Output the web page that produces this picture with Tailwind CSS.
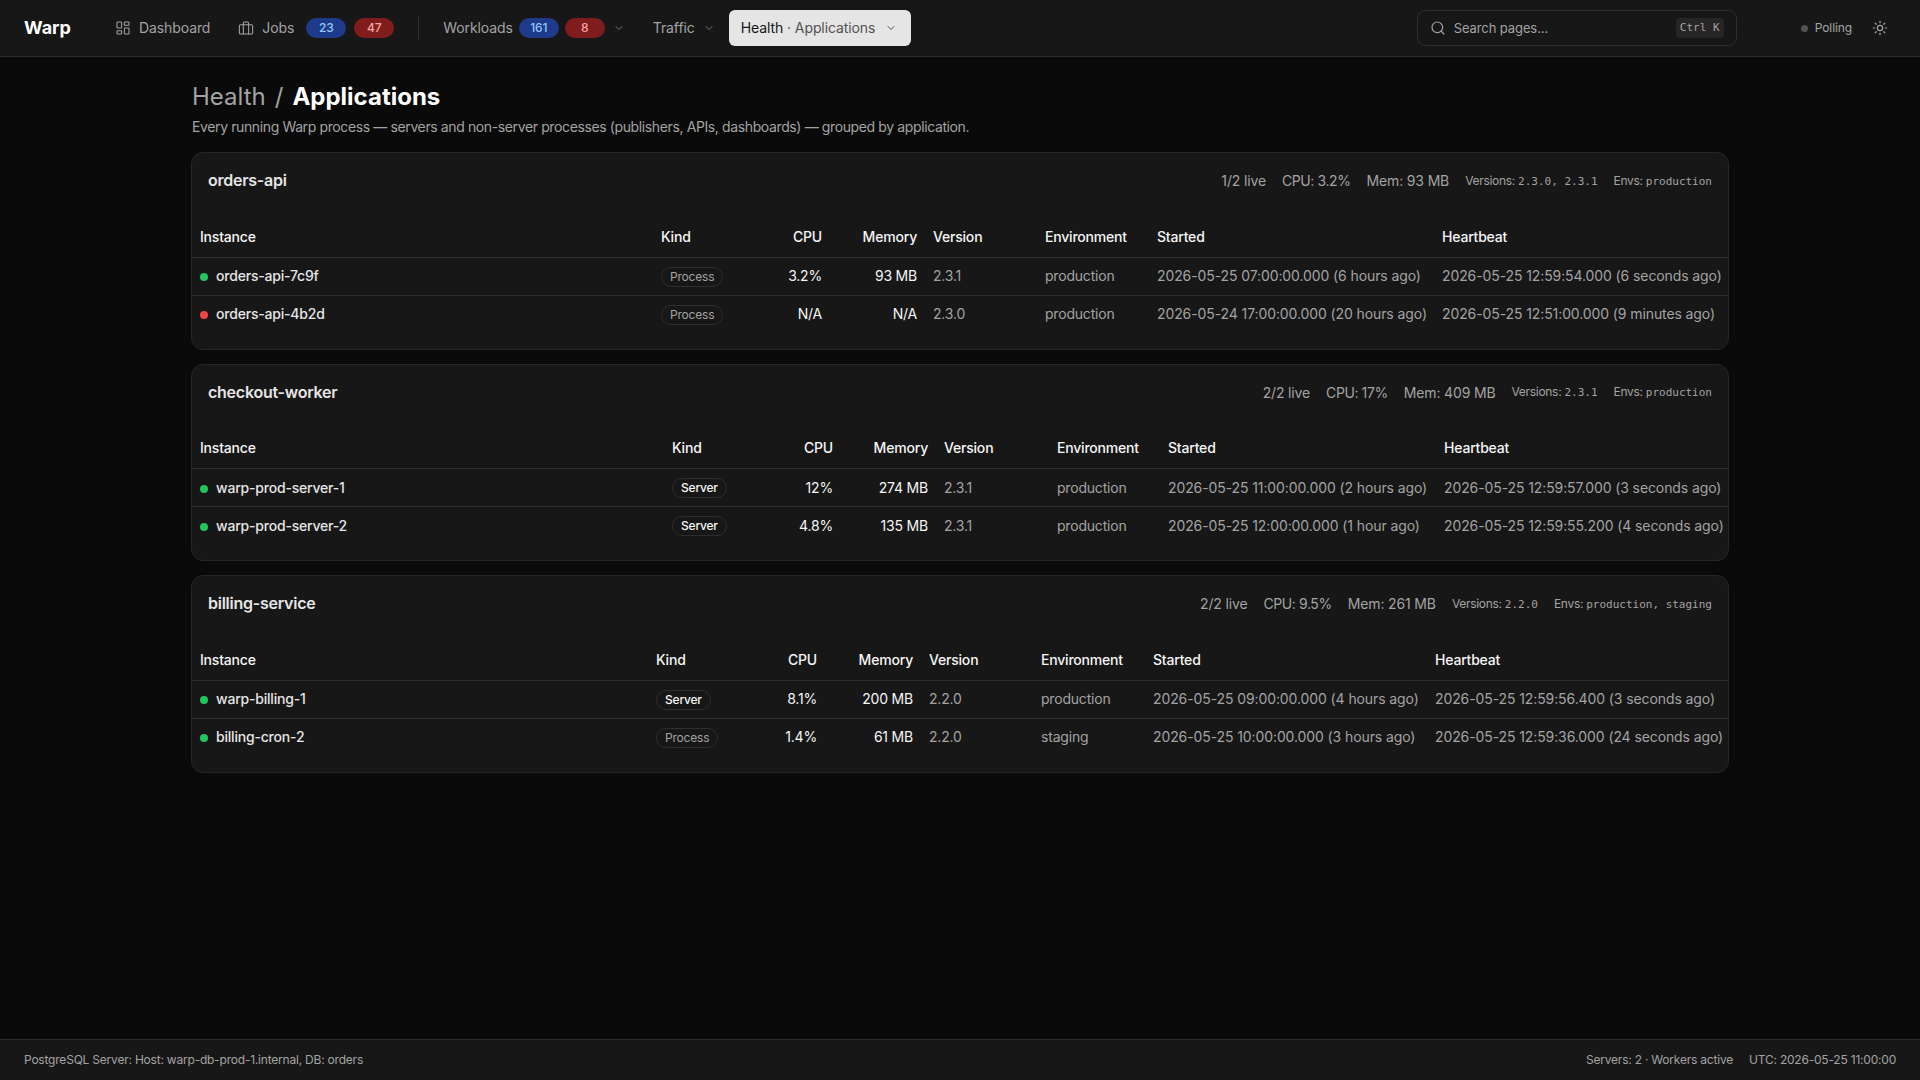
<!DOCTYPE html>
<html lang="en">
<head>
    <meta charset="UTF-8">
    <title>Warp - Health / Applications</title>
    <script src="https://cdn.jsdelivr.net/npm/@tailwindcss/browser@4"></script>
</head>
<body class="bg-[#0a0a0a] text-neutral-200 font-['Inter',sans-serif] h-[1080px] flex flex-col overflow-hidden">
    <!-- Top nav -->
    <header class="h-[57px] shrink-0 bg-[#171717] border-b border-[#2e2e2e] flex items-center pl-6 pr-8 text-sm tracking-[-0.1px] text-[#a3a3a3]">
        <span class="text-lg font-bold text-white w-[79px] tracking-normal">Warp</span>
        <a class="flex items-center gap-2 px-3 h-9">
            <svg class="w-4 h-4" viewBox="0 0 24 24" fill="none" stroke="currentColor" stroke-width="1.6" stroke-linecap="round" stroke-linejoin="round"><rect x="3" y="3" width="7" height="9" rx="1"/><rect x="14" y="3" width="7" height="5" rx="1"/><rect x="14" y="12" width="7" height="9" rx="1"/><rect x="3" y="16" width="7" height="5" rx="1"/></svg>
            <span>Dashboard</span>
        </a>
        <a class="flex items-center gap-2 pl-4 h-9">
            <svg class="w-4 h-4" viewBox="0 0 24 24" fill="none" stroke="currentColor" stroke-width="1.6" stroke-linecap="round" stroke-linejoin="round"><rect x="2" y="7" width="20" height="14" rx="2"/><path d="M16 21V5a2 2 0 0 0-2-2h-4a2 2 0 0 0-2 2v16"/></svg>
            <span>Jobs</span>
            <span class="ml-1 w-10 h-5 rounded-full bg-[#1e3a8a] text-[#93c5fd] text-xs font-medium flex items-center justify-center">23</span>
            <span class="w-10 h-5 rounded-full bg-[#7f1d1d] text-[#fca5a5] text-xs font-medium flex items-center justify-center">47</span>
        </a>
        <div class="w-px h-6 bg-[#2e2e2e] ml-6 mr-6"></div>
        <a class="flex items-center gap-1.5 h-9">
            <span>Workloads</span>
            <span class="w-10 h-5 rounded-full bg-[#1e3a8a] text-[#93c5fd] text-xs font-medium flex items-center justify-center">161</span>
            <span class="w-10 h-5 rounded-full bg-[#7f1d1d] text-[#fca5a5] text-xs font-medium flex items-center justify-center">8</span>
            <svg class="w-3 h-3 ml-0.5 text-[#737373]" viewBox="0 0 24 24" fill="none" stroke="currentColor" stroke-width="2" stroke-linecap="round" stroke-linejoin="round"><path d="m6 9 6 6 6-6"/></svg>
        </a>
        <a class="flex items-center gap-2 ml-7 h-9">
            <span>Traffic</span>
            <svg class="w-3 h-3 text-[#737373]" viewBox="0 0 24 24" fill="none" stroke="currentColor" stroke-width="2" stroke-linecap="round" stroke-linejoin="round"><path d="m6 9 6 6 6-6"/></svg>
        </a>
        <a class="flex items-center gap-1 ml-3.5 h-9 pl-3 pr-3.5 rounded-md bg-[#e5e5e5] text-[#171717]">
            <span>Health</span>
            <span class="text-[#525252]">· Applications</span>
            <svg class="w-3 h-3 ml-1.5 text-[#525252]" viewBox="0 0 24 24" fill="none" stroke="currentColor" stroke-width="2" stroke-linecap="round" stroke-linejoin="round"><path d="m6 9 6 6 6-6"/></svg>
        </a>
        <div class="ml-auto w-[320px] h-9 rounded-lg border border-[#2e2e2e] flex items-center pl-3 pr-3">
            <svg class="w-4 h-4 text-[#a3a3a3]" viewBox="0 0 24 24" fill="none" stroke="currentColor" stroke-width="1.8" stroke-linecap="round" stroke-linejoin="round"><circle cx="11" cy="11" r="8"/><path d="m21 21-4.3-4.3"/></svg>
            <span class="ml-2 text-[13px] text-[#a3a3a3]">Search pages...</span>
            <kbd class="ml-auto h-5 w-12 rounded bg-[#262626] text-[#a3a3a3] text-[11px] tracking-normal font-['DejaVu_Sans_Mono',monospace] flex items-center justify-center">Ctrl K</kbd>
        </div>
        <div class="ml-16 flex items-center gap-[7px] text-xs">
            <span class="w-[7px] h-[7px] rounded-full bg-[#525252]"></span>
            <span>Polling</span>
        </div>
        <svg class="ml-5 w-4 h-4 text-[#a3a3a3]" viewBox="0 0 24 24" fill="none" stroke="currentColor" stroke-width="1.8" stroke-linecap="round" stroke-linejoin="round"><circle cx="12" cy="12" r="4"/><path d="M12 2v2"/><path d="M12 20v2"/><path d="m4.93 4.93 1.41 1.41"/><path d="m17.66 17.66 1.41 1.41"/><path d="M2 12h2"/><path d="M20 12h2"/><path d="m6.34 17.66-1.41 1.41"/><path d="m19.07 4.93-1.41 1.41"/></svg>
    </header>

    <!-- Main content -->
    <main class="flex-1 w-[1538px] mx-auto pt-6">
        <h1 class="ml-px text-2xl leading-8 font-bold text-white"><span class="font-normal text-[#a3a3a3]">Health</span><span class="font-normal text-[#a3a3a3] mx-[9px]">/</span>Applications</h1>
        <p class="ml-px text-sm leading-5 tracking-[-0.38px] text-[#a3a3a3] mt-1 mb-[15px]">Every running Warp process — servers and non-server processes (publishers, APIs, dashboards) — grouped by application.</p>

        <!-- orders-api -->
        <section class="bg-[#171717] border border-[#262626] rounded-xl h-[197.5px] mb-3.5">
            <div class="flex items-center justify-between h-[64px] pb-2 px-4">
                <h2 class="mb-0.5 text-base font-semibold tracking-[-0.25px] text-[#e5e5e5]">orders-api</h2>
                <div class="flex items-center gap-4 text-sm tracking-[-0.15px] text-[#a3a3a3]">
                    <span>1/2 live</span><span class="tracking-[-0.4px]">CPU: 3.2%</span><span>Mem: 93 MB</span>
                    <span class="text-xs tracking-tight">Versions: <span class="font-['DejaVu_Sans_Mono',monospace] text-[11px] tracking-normal">2.3.0, 2.3.1</span></span>
                    <span class="text-xs tracking-tight">Envs: <span class="font-['DejaVu_Sans_Mono',monospace] text-[11px] tracking-normal">production</span></span>
                </div>
            </div>
            <table class="w-full table-fixed text-sm tracking-[-0.2px]">
                <colgroup><col class="w-[461px]"><col class="w-[116px]"><col class="w-[61px]"><col class="w-[95px]"><col class="w-[112px]"><col class="w-[112px]"><col class="w-[285px]"><col></colgroup>
                <thead class="text-[#f5f5f5]">
                    <tr class="h-[40px] border-b border-[#2e2e2e]">
                        <th class="px-2 text-left font-medium">Instance</th><th class="px-2 text-left font-medium">Kind</th><th class="px-2 text-right font-medium">CPU</th><th class="px-2 text-right font-medium">Memory</th><th class="px-2 text-left font-medium">Version</th><th class="px-2 text-left font-medium">Environment</th><th class="px-2 text-left font-medium">Started</th><th class="px-2 text-left font-medium">Heartbeat</th>
                    </tr>
                </thead>
                <tbody>
                    <tr class="h-[38px] border-b border-[#2e2e2e]">
                        <td class="px-2 font-medium text-[#e5e5e5]"><span class="inline-block w-2 h-2 rounded-full bg-[#22c55e] mr-2"></span>orders-api-7c9f</td>
                        <td class="px-2"><span class="inline-flex items-center h-5 px-2 rounded-full border border-[#2e2e2e] text-xs text-[#a3a3a3]">Process</span></td>
                        <td class="px-2 text-right text-[#f5f5f5]">3.2%</td><td class="px-2 text-right text-[#f5f5f5]">93 MB</td>
                        <td class="px-2 text-[#a3a3a3]">2.3.1</td><td class="px-2 text-[#a3a3a3]">production</td>
                        <td class="px-2 text-[#a3a3a3] tracking-[-0.1px] whitespace-nowrap">2026-05-25 07:00:00.000 (6 hours ago)</td><td class="px-2 text-[#a3a3a3] tracking-[-0.1px] whitespace-nowrap">2026-05-25 12:59:54.000 (6 seconds ago)</td>
                    </tr>
                    <tr class="h-[38px]">
                        <td class="px-2 font-medium text-[#e5e5e5]"><span class="inline-block w-2 h-2 rounded-full bg-[#ef4444] mr-2"></span>orders-api-4b2d</td>
                        <td class="px-2"><span class="inline-flex items-center h-5 px-2 rounded-full border border-[#2e2e2e] text-xs text-[#a3a3a3]">Process</span></td>
                        <td class="px-2 text-right text-[#f5f5f5]">N/A</td><td class="px-2 text-right text-[#f5f5f5]">N/A</td>
                        <td class="px-2 text-[#a3a3a3]">2.3.0</td><td class="px-2 text-[#a3a3a3]">production</td>
                        <td class="px-2 text-[#a3a3a3] tracking-[-0.1px] whitespace-nowrap">2026-05-24 17:00:00.000 (20 hours ago)</td><td class="px-2 text-[#a3a3a3] tracking-[-0.1px] whitespace-nowrap">2026-05-25 12:51:00.000 (9 minutes ago)</td>
                    </tr>
                </tbody>
            </table>
        </section>

        <!-- checkout-worker -->
        <section class="bg-[#171717] border border-[#262626] rounded-xl h-[197.5px] mb-3.5">
            <div class="flex items-center justify-between h-[64px] pb-2 px-4">
                <h2 class="mb-0.5 text-base font-semibold tracking-[-0.25px] text-[#e5e5e5]">checkout-worker</h2>
                <div class="flex items-center gap-4 text-sm tracking-[-0.15px] text-[#a3a3a3]">
                    <span>2/2 live</span><span class="tracking-[-0.4px]">CPU: 17%</span><span>Mem: 409 MB</span>
                    <span class="text-xs tracking-tight">Versions: <span class="font-['DejaVu_Sans_Mono',monospace] text-[11px] tracking-normal">2.3.1</span></span>
                    <span class="text-xs tracking-tight">Envs: <span class="font-['DejaVu_Sans_Mono',monospace] text-[11px] tracking-normal">production</span></span>
                </div>
            </div>
            <table class="w-full table-fixed text-sm tracking-[-0.2px]">
                <colgroup><col class="w-[472px]"><col class="w-[116px]"><col class="w-[61px]"><col class="w-[95px]"><col class="w-[113px]"><col class="w-[111px]"><col class="w-[276px]"><col></colgroup>
                <thead class="text-[#f5f5f5]">
                    <tr class="h-[40px] border-b border-[#2e2e2e]">
                        <th class="px-2 text-left font-medium">Instance</th><th class="px-2 text-left font-medium">Kind</th><th class="px-2 text-right font-medium">CPU</th><th class="px-2 text-right font-medium">Memory</th><th class="px-2 text-left font-medium">Version</th><th class="px-2 text-left font-medium">Environment</th><th class="px-2 text-left font-medium">Started</th><th class="px-2 text-left font-medium">Heartbeat</th>
                    </tr>
                </thead>
                <tbody>
                    <tr class="h-[38px] border-b border-[#2e2e2e]">
                        <td class="px-2 font-medium text-[#e5e5e5]"><span class="inline-block w-2 h-2 rounded-full bg-[#22c55e] mr-2"></span>warp-prod-server-1</td>
                        <td class="px-2"><span class="inline-flex items-center h-5 px-2 rounded-full border border-[#2e2e2e] text-xs font-medium text-[#f5f5f5]">Server</span></td>
                        <td class="px-2 text-right text-[#f5f5f5]">12%</td><td class="px-2 text-right text-[#f5f5f5]">274 MB</td>
                        <td class="px-2 text-[#a3a3a3]">2.3.1</td><td class="px-2 text-[#a3a3a3]">production</td>
                        <td class="px-2 text-[#a3a3a3] tracking-[-0.1px] whitespace-nowrap">2026-05-25 11:00:00.000 (2 hours ago)</td><td class="px-2 text-[#a3a3a3] tracking-[-0.1px] whitespace-nowrap">2026-05-25 12:59:57.000 (3 seconds ago)</td>
                    </tr>
                    <tr class="h-[38px]">
                        <td class="px-2 font-medium text-[#e5e5e5]"><span class="inline-block w-2 h-2 rounded-full bg-[#22c55e] mr-2"></span>warp-prod-server-2</td>
                        <td class="px-2"><span class="inline-flex items-center h-5 px-2 rounded-full border border-[#2e2e2e] text-xs font-medium text-[#f5f5f5]">Server</span></td>
                        <td class="px-2 text-right text-[#f5f5f5]">4.8%</td><td class="px-2 text-right text-[#f5f5f5]">135 MB</td>
                        <td class="px-2 text-[#a3a3a3]">2.3.1</td><td class="px-2 text-[#a3a3a3]">production</td>
                        <td class="px-2 text-[#a3a3a3] tracking-[-0.1px] whitespace-nowrap">2026-05-25 12:00:00.000 (1 hour ago)</td><td class="px-2 text-[#a3a3a3] tracking-[-0.1px] whitespace-nowrap">2026-05-25 12:59:55.200 (4 seconds ago)</td>
                    </tr>
                </tbody>
            </table>
        </section>

        <!-- billing-service -->
        <section class="bg-[#171717] border border-[#262626] rounded-xl h-[197.5px]">
            <div class="flex items-center justify-between h-[64px] pb-2 px-4">
                <h2 class="mb-0.5 text-base font-semibold tracking-[-0.25px] text-[#e5e5e5]">billing-service</h2>
                <div class="flex items-center gap-4 text-sm tracking-[-0.15px] text-[#a3a3a3]">
                    <span>2/2 live</span><span class="tracking-[-0.4px]">CPU: 9.5%</span><span>Mem: 261 MB</span>
                    <span class="text-xs tracking-tight">Versions: <span class="font-['DejaVu_Sans_Mono',monospace] text-[11px] tracking-normal">2.2.0</span></span>
                    <span class="text-xs tracking-tight">Envs: <span class="font-['DejaVu_Sans_Mono',monospace] text-[11px] tracking-normal">production, staging</span></span>
                </div>
            </div>
            <table class="w-full table-fixed text-sm tracking-[-0.2px]">
                <colgroup><col class="w-[456px]"><col class="w-[116px]"><col class="w-[61px]"><col class="w-[96px]"><col class="w-[112px]"><col class="w-[112px]"><col class="w-[282px]"><col></colgroup>
                <thead class="text-[#f5f5f5]">
                    <tr class="h-[40px] border-b border-[#2e2e2e]">
                        <th class="px-2 text-left font-medium">Instance</th><th class="px-2 text-left font-medium">Kind</th><th class="px-2 text-right font-medium">CPU</th><th class="px-2 text-right font-medium">Memory</th><th class="px-2 text-left font-medium">Version</th><th class="px-2 text-left font-medium">Environment</th><th class="px-2 text-left font-medium">Started</th><th class="px-2 text-left font-medium">Heartbeat</th>
                    </tr>
                </thead>
                <tbody>
                    <tr class="h-[38px] border-b border-[#2e2e2e]">
                        <td class="px-2 font-medium text-[#e5e5e5]"><span class="inline-block w-2 h-2 rounded-full bg-[#22c55e] mr-2"></span>warp-billing-1</td>
                        <td class="px-2"><span class="inline-flex items-center h-5 px-2 rounded-full border border-[#2e2e2e] text-xs font-medium text-[#f5f5f5]">Server</span></td>
                        <td class="px-2 text-right text-[#f5f5f5]">8.1%</td><td class="px-2 text-right text-[#f5f5f5]">200 MB</td>
                        <td class="px-2 text-[#a3a3a3]">2.2.0</td><td class="px-2 text-[#a3a3a3]">production</td>
                        <td class="px-2 text-[#a3a3a3] tracking-[-0.1px] whitespace-nowrap">2026-05-25 09:00:00.000 (4 hours ago)</td><td class="px-2 text-[#a3a3a3] tracking-[-0.1px] whitespace-nowrap">2026-05-25 12:59:56.400 (3 seconds ago)</td>
                    </tr>
                    <tr class="h-[38px]">
                        <td class="px-2 font-medium text-[#e5e5e5]"><span class="inline-block w-2 h-2 rounded-full bg-[#22c55e] mr-2"></span>billing-cron-2</td>
                        <td class="px-2"><span class="inline-flex items-center h-5 px-2 rounded-full border border-[#2e2e2e] text-xs text-[#a3a3a3]">Process</span></td>
                        <td class="px-2 text-right text-[#f5f5f5]">1.4%</td><td class="px-2 text-right text-[#f5f5f5]">61 MB</td>
                        <td class="px-2 text-[#a3a3a3]">2.2.0</td><td class="px-2 text-[#a3a3a3]">staging</td>
                        <td class="px-2 text-[#a3a3a3] tracking-[-0.1px] whitespace-nowrap">2026-05-25 10:00:00.000 (3 hours ago)</td><td class="px-2 text-[#a3a3a3] tracking-[-0.1px] whitespace-nowrap">2026-05-25 12:59:36.000 (24 seconds ago)</td>
                    </tr>
                </tbody>
            </table>
        </section>
    </main>

    <!-- Footer -->
    <footer class="h-[41px] shrink-0 bg-[#171717] border-t border-[#2e2e2e] flex items-center justify-between px-6 text-xs tracking-[-0.21px] text-[#a3a3a3]">
        <span>PostgreSQL Server: Host: warp-db-prod-1.internal, DB: orders</span>
        <div class="flex items-center gap-4">
            <span>Servers: 2 · Workers active</span>
            <span>UTC: 2026-05-25 11:00:00</span>
        </div>
    </footer>
</body>
</html>
